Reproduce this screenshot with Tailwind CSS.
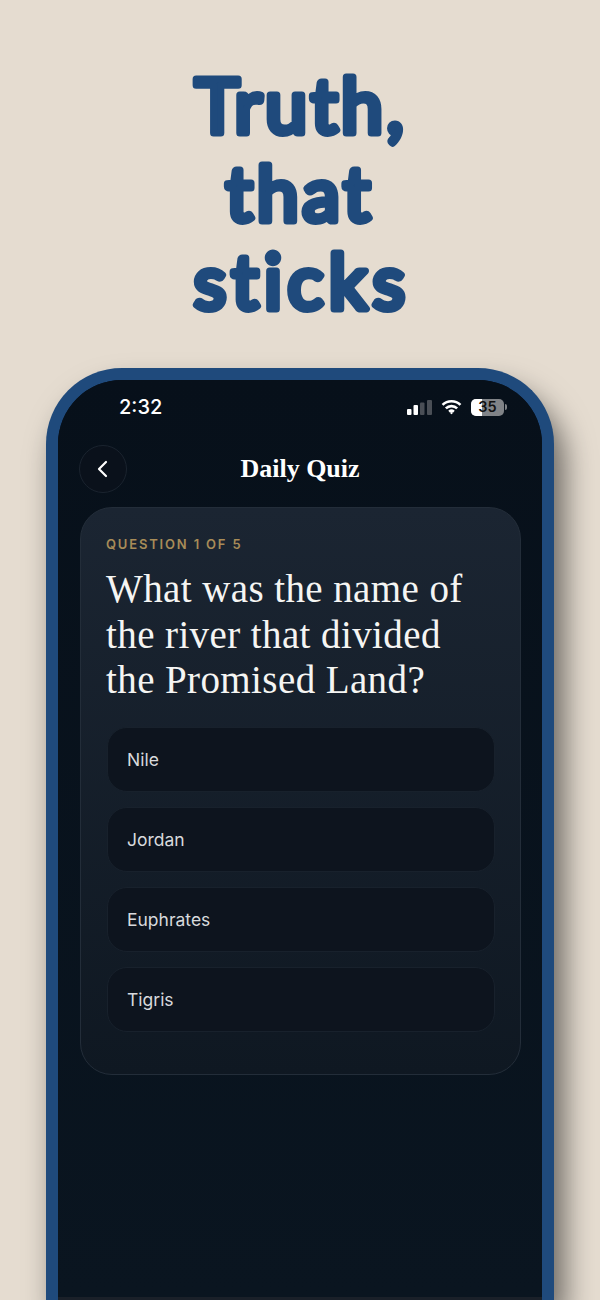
<!DOCTYPE html>
<html lang="en">
<head>
    <meta charset="UTF-8">
    <meta name="viewport" content="width=device-width, initial-scale=1.0">
    <title>Daily Quiz</title>
    <script src="https://cdn.jsdelivr.net/npm/@tailwindcss/browser@4"></script>
</head>
<body class="bg-[#e5dcd0]">
<div class="w-[600px] h-[1300px] overflow-hidden flex flex-col items-center">

    <!-- headline, stroked so the corners come out round -->
    <svg class="block w-[600px] h-[368px] shrink-0" viewBox="0 0 600 368" fill="#1f4a7c" stroke="#1f4a7c" stroke-width="7" stroke-linejoin="round" text-anchor="middle" font-family="Lato, sans-serif" font-size="75" font-weight="400">
        <text x="301" y="132.5" letter-spacing="3.5">Truth,</text>
        <text x="300" y="220.5" letter-spacing="4">that</text>
        <text x="302" y="309" letter-spacing="5.5">sticks</text>
    </svg>

    <!-- phone -->
    <div class="w-[508px] h-[932px] shrink-0 rounded-t-[76px] border-12 border-b-0 border-[#1f4a7c] bg-[#070e18] shadow-[10px_20px_30px_rgba(0,0,0,0.55)] font-['Inter',sans-serif]">
      <div class="h-full rounded-t-[64px] border-b-[3px] border-[#1a2029] bg-gradient-to-b from-[#07101a] to-[#0a1520]">

        <div class="flex items-center justify-between h-[54px] pl-[61px] pr-[35px]">
            <span class="text-[20px] leading-none font-medium text-white">2:32</span>
            <div class="flex items-center gap-[9px]">
                <svg width="25" height="15" viewBox="0 0 25 15">
                    <rect x="0" y="9" width="4.5" height="6" rx="1" fill="#fff"/>
                    <rect x="6.5" y="5" width="4.5" height="10" rx="1" fill="#fff"/>
                    <rect x="13" y="2.5" width="4.5" height="12.5" rx="1" fill="#4a4f56"/>
                    <rect x="20" y="0" width="5" height="15" rx="1" fill="#4a4f56"/>
                </svg>
                <svg width="21" height="16" viewBox="0 0 22 17" fill="none" stroke="#fff" stroke-width="2.8">
                    <path d="M1.5 6.2a13.6 13.6 0 0 1 19 0"/>
                    <path d="M5 10a8.6 8.6 0 0 1 12 0"/>
                    <path d="M8.5 13.5a3.8 3.8 0 0 1 5 0"/>
                    <circle cx="11" cy="15" r="1.2" fill="#fff" stroke="none"/>
                </svg>
                <div class="flex items-center gap-[1px]">
                    <div class="relative w-[33px] h-[17px] rounded-[5px] bg-[#808387] overflow-hidden flex items-center justify-center">
                        <div class="absolute left-0 top-0 bottom-0 w-[11px] bg-white"></div>
                        <span class="relative text-[14.5px] leading-none font-semibold text-[#111]">35</span>
                    </div>
                    <div class="w-[2px] h-[6px] rounded-r-sm bg-[#808387]"></div>
                </div>
            </div>
        </div>

        <div class="px-[21px]">
            <div class="relative flex items-center justify-center h-[48px] mt-[11px]">
                <button class="absolute left-0 top-0 w-[48px] h-[48px] rounded-full border border-[#1a232e] bg-[#0a111b] flex items-center justify-center">
                    <svg width="14" height="18" viewBox="0 0 14 18" fill="none" stroke="#fff" stroke-width="2.2" stroke-linecap="round" stroke-linejoin="round">
                        <path d="M10 2 3 9l7 7"/>
                    </svg>
                </button>
                <h2 class="font-['Liberation_Serif',serif] font-bold text-[26px] leading-none text-white">Daily Quiz</h2>
            </div>

            <div class="mt-[14px] ml-[1px] h-[568px] rounded-[32px] border border-[#232d39] bg-gradient-to-b from-[#1b2532] to-[#0f1822] pl-[26px] pr-[25px] pt-[28px]">
                <p class="-ml-[1px] text-[13px] leading-[16px] font-semibold tracking-[0.14em] text-[#a88c58]">QUESTION 1 OF 5</p>
                <h1 class="-ml-[1px] mt-[14px] font-['Liberation_Serif',serif] text-[39px] leading-[45.5px] tracking-[0.4px] text-[#f5f5f3]">What was the name of<br>the river that divided<br>the Promised Land?</h1>
                <div class="mt-[24px] flex flex-col gap-[15px]">
                    <div class="h-[65px] rounded-[20px] border border-[#18212c] bg-[#0d141e] flex items-center pl-[19px] pt-[2px] text-[17.5px] text-[#d8dadd]">Nile</div>
                    <div class="h-[65px] rounded-[20px] border border-[#18212c] bg-[#0d141e] flex items-center pl-[19px] pt-[2px] text-[17.5px] text-[#d8dadd]">Jordan</div>
                    <div class="h-[65px] rounded-[20px] border border-[#18212c] bg-[#0d141e] flex items-center pl-[19px] pt-[2px] text-[17.5px] text-[#d8dadd]">Euphrates</div>
                    <div class="h-[65px] rounded-[20px] border border-[#18212c] bg-[#0d141e] flex items-center pl-[19px] pt-[2px] text-[17.5px] text-[#d8dadd]">Tigris</div>
                </div>
            </div>
        </div>
      </div>
    </div>
</div>
</body>
</html>
